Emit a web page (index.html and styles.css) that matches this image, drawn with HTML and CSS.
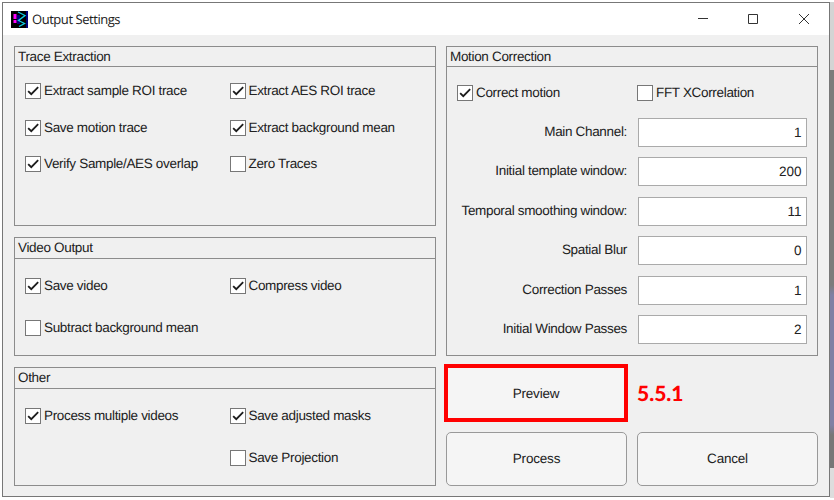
FILE: index.html
```html
<!DOCTYPE html>
<html lang="en">
<head>
<meta charset="utf-8">
<title>Output Settings</title>
<link rel="stylesheet" href="styles.css">
</head>
<body>
<svg width="0" height="0" class="defs"><symbol id="tick" viewBox="0 0 13 13"><path d="M2 6.6 4.900 9.500 11.300 3" fill="none" stroke="#1c1c1c" stroke-width="1.700"/></symbol></svg>
<main class="window">
  <header class="titlebar">
    <svg class="logo" width="17" height="17" viewBox="0 0 17 17"><path fill="#000" d="M0 0h17v17H0z"/><path fill="#000078" d="M15 0h2v17h-2zM6 4h3v9H6z"/><path fill="#f0f" d="M2.500 3h3v5h-3zM2.500 9h3v3h-3z"/><path d="M7 1 14 4.500 7.500 9.500 13.500 12.500 8 15.500" fill="none" stroke="#10d0e8" stroke-width="1.3"/></svg>
    <h1 class="title">Output Settings</h1>
    <svg class="controls" width="114" height="14" viewBox="0 0 114 14" fill="none" stroke="#333"><path d="M1 6.500h10M51.500 2.500h9v9h-9zM102 2l10 10M112 2l-10 10"/></svg>
  </header>
  <div class="content">
    <div class="left">
      <section class="panel trace">
        <h2>Trace Extraction</h2>
        <div class="checks">
          <label class="check"><span class="box"><svg><use href="#tick"/></svg></span><span>Extract sample ROI trace</span></label>
          <label class="check"><span class="box"><svg><use href="#tick"/></svg></span><span>Extract AES ROI trace</span></label>
          <label class="check"><span class="box"><svg><use href="#tick"/></svg></span><span>Save motion trace</span></label>
          <label class="check"><span class="box"><svg><use href="#tick"/></svg></span><span>Extract background mean</span></label>
          <label class="check"><span class="box"><svg><use href="#tick"/></svg></span><span>Verify Sample/AES overlap</span></label>
          <label class="check"><span class="box"></span><span>Zero Traces</span></label>
        </div>
      </section>
      <section class="panel video">
        <h2>Video Output</h2>
        <div class="checks">
          <label class="check"><span class="box"><svg><use href="#tick"/></svg></span><span>Save video</span></label>
          <label class="check"><span class="box"><svg><use href="#tick"/></svg></span><span>Compress video</span></label>
          <label class="check"><span class="box"></span><span>Subtract background mean</span></label>
        </div>
      </section>
      <section class="panel other">
        <h2>Other</h2>
        <div class="checks">
          <label class="check"><span class="box"><svg><use href="#tick"/></svg></span><span>Process multiple videos</span></label>
          <label class="check"><span class="box"><svg><use href="#tick"/></svg></span><span>Save adjusted masks</span></label>
          <label class="check second"><span class="box"></span><span>Save Projection</span></label>
        </div>
      </section>
    </div>
    <div class="right">
      <section class="panel motion">
        <h2>Motion Correction</h2>
        <div class="checks">
          <label class="check"><span class="box"><svg><use href="#tick"/></svg></span><span>Correct motion</span></label>
          <label class="check"><span class="box"></span><span>FFT XCorrelation</span></label>
        </div>
        <div class="fields">
          <span class="name">Main Channel:</span><span class="field">1</span>
          <span class="name">Initial template window:</span><span class="field">200</span>
          <span class="name">Temporal smoothing window:</span><span class="field">11</span>
          <span class="name">Spatial Blur</span><span class="field">0</span>
          <span class="name">Correction Passes</span><span class="field">1</span>
          <span class="name">Initial Window Passes</span><span class="field">2</span>
        </div>
      </section>
      <div class="actions">
        <button class="button preview">Preview</button><strong class="step">5.5.1</strong>
        <button class="button">Process</button><button class="button">Cancel</button>
      </div>
    </div>
  </div>
</main>
</body>
</html>
```
FILE: styles.css
```css
* { box-sizing: border-box; }
body {
  margin: 0;
  width: 834px;
  height: 500px;
  overflow: hidden;
  padding: 2px 0 0 2px;
  background: linear-gradient(#fff, #fff) 0 498px / 100% 2px no-repeat,
    linear-gradient(#fff, #fff) 0 0 / 100% 2px no-repeat,
    linear-gradient(#d4d4d4 0 70px, #7c7c7c 70px 285px, #8080a4 295px 425px, #777 435px 468px, #ddd 468px) 830px 0 / 4px 100% no-repeat, #fff;
  font: 13.5px "Liberation Sans", Arial, sans-serif;
  letter-spacing: -.33px;
  text-rendering: geometricPrecision;
  color: #212121;
}
.defs { position: absolute; }
.window {
  width: 828px;
  height: 495px;
  border: 1px solid #777;
  background: #f0f0f0;
}
.titlebar {
  display: flex;
  align-items: center;
  height: 32px;
  padding: 0 18px 0 8px;
  background: #fff;
}
.title {
  flex: 1;
  margin: 0 0 0 4px;
  font: 13px "Open Sans", "Noto Sans", sans-serif;
  letter-spacing: -.45px;
}
.content { display: flex; gap: 10px; padding: 11px 0 0 11px; }
.left { width: 422px; }
.right { width: 372px; }
.panel { border: 1px solid #8c8c8c; }
.panel h2 {
  height: 21px;
  margin: 0;
  padding-left: 3px;
  border-bottom: 1px solid #8c8c8c;
  font: inherit;
  line-height: 19px;
}
.panel.trace h2, .panel.motion h2 { height: 20px; }
.checks { display: grid; grid-template-columns: 204.5px 1fr; padding-left: 10px; }
.check { display: flex; align-items: center; height: 16px; gap: 3px; line-height: 14px; white-space: nowrap; }
.box {
  display: flex;
  width: 16px;
  height: 16px;
  border: 1px solid #777;
  background: #fff;
}
.box svg { width: 14px; height: 14px; }
.trace { height: 180px; }
.trace .checks { padding-top: 16px; row-gap: 20.5px; }
.video { height: 119px; margin-top: 11px; }
.video .checks { padding-top: 19px; row-gap: 26px; }
.other { height: 119px; margin-top: 11px; }
.other .checks { padding-top: 19px; row-gap: 26px; }
.second { grid-column: 2; }
.motion { height: 310px; }
.motion .checks { grid-template-columns: 180px 1fr; padding-top: 18px; }
.fields {
  display: grid;
  grid-template-columns: 180px 169px;
  grid-auto-rows: 29px;
  gap: 10.4px 10.5px;
  margin-top: 17px;
  line-height: 28px;
  text-align: right;
}
.field { padding-right: 4px; border: 1px solid #aaa; background: #fff; letter-spacing: 0; }
.actions {
  display: grid;
  grid-template-columns: 181px 181px;
  grid-template-rows: 58px 54px;
  gap: 9.5px 10px;
  padding-top: 8px;
}
.button {
  padding: 0;
  border: 1px solid #999;
  border-radius: 5px;
  background: #f5f5f5;
  color: inherit;
  font: inherit;
  letter-spacing: -.2px;
  text-rendering: inherit;
}
.preview { margin: 0 -1px 0 -2px; border: 4px solid #f00; border-radius: 0; }
.step { align-self: center; color: #f00; font: 900 21px/1 Lato, sans-serif; letter-spacing: 0; }
```
